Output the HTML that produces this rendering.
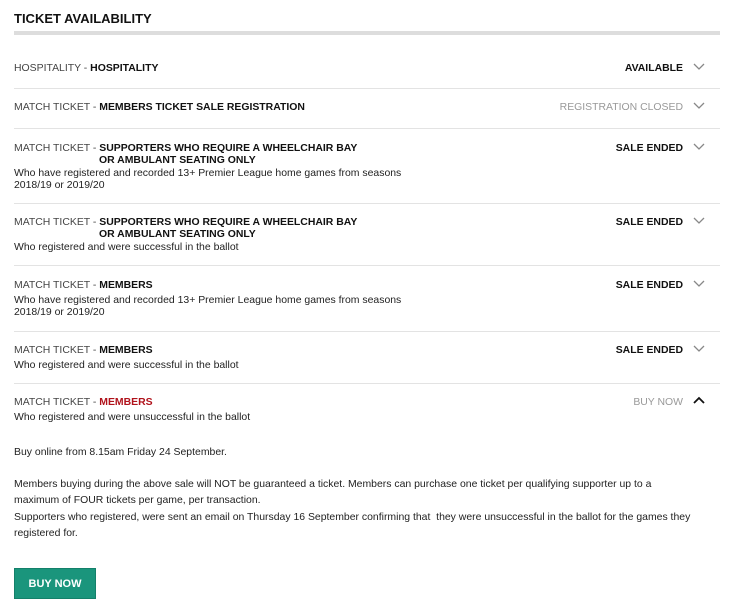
<!DOCTYPE html>
<html><head><style>
body{margin:0;width:730px;height:613px;background:#fff;font-family:"Liberation Sans",Arial,sans-serif;font-size:10.45px;color:#222;position:relative;overflow:hidden}
.a{position:absolute;white-space:nowrap;line-height:13px}
.t{position:absolute;left:14px;top:11px;font-size:13px;font-weight:bold;color:#111}
.bar{position:absolute;left:14px;top:31px;width:706px;height:4px;background:#ddd}
.sep{position:absolute;left:14px;width:706px;height:1px;background:#e3e3e3}
.g{color:#444}
b{color:#111}
.r{position:absolute;right:47px;font-weight:bold;color:#111;line-height:13px}
.rg{color:#999;font-weight:normal}
.ch{position:absolute;left:693px;width:12px;height:8px}
.btn{position:absolute;left:14px;top:568px;width:82px;height:31px;background:#1a957c;color:#fff;font-weight:bold;font-size:11px;text-align:center;line-height:31px;border:1px solid #14806a;box-sizing:border-box}
</style></head><body>
<div class="t">TICKET AVAILABILITY</div>
<div class="bar"></div>

<div class="a" style="left:14px;top:62px"><span class="g">HOSPITALITY - </span><b>HOSPITALITY</b></div>
<div class="r" style="top:62px">AVAILABLE</div>
<svg class="ch" style="top:63px" viewBox="0 0 12 8"><path d="M1 1l5 5 5-5" fill="none" stroke="#888" stroke-width="1.3"/></svg>
<div class="sep" style="top:88px"></div>

<div class="a" style="left:14px;top:101px"><span class="g">MATCH TICKET - </span><b>MEMBERS TICKET SALE REGISTRATION</b></div>
<div class="r rg" style="top:101px">REGISTRATION CLOSED</div>
<svg class="ch" style="top:102px" viewBox="0 0 12 8"><path d="M1 1l5 5 5-5" fill="none" stroke="#888" stroke-width="1.3"/></svg>
<div class="sep" style="top:128px"></div>

<div class="a" style="left:14px;top:142px"><span class="g">MATCH TICKET - </span><b>SUPPORTERS WHO REQUIRE A WHEELCHAIR BAY</b></div>
<div class="a" style="left:99px;top:154px"><b>OR AMBULANT SEATING ONLY</b></div>
<div class="a" style="left:14px;top:167px">Who have registered and recorded 13+ Premier League home games from seasons</div>
<div class="a" style="left:14px;top:179px">2018/19 or 2019/20</div>
<div class="r" style="top:142px">SALE ENDED</div>
<svg class="ch" style="top:143px" viewBox="0 0 12 8"><path d="M1 1l5 5 5-5" fill="none" stroke="#888" stroke-width="1.3"/></svg>
<div class="sep" style="top:203px"></div>

<div class="a" style="left:14px;top:216px"><span class="g">MATCH TICKET - </span><b>SUPPORTERS WHO REQUIRE A WHEELCHAIR BAY</b></div>
<div class="a" style="left:99px;top:228px"><b>OR AMBULANT SEATING ONLY</b></div>
<div class="a" style="left:14px;top:241px">Who registered and were successful in the ballot</div>
<div class="r" style="top:216px">SALE ENDED</div>
<svg class="ch" style="top:217px" viewBox="0 0 12 8"><path d="M1 1l5 5 5-5" fill="none" stroke="#888" stroke-width="1.3"/></svg>
<div class="sep" style="top:265px"></div>

<div class="a" style="left:14px;top:279px"><span class="g">MATCH TICKET - </span><b>MEMBERS</b></div>
<div class="a" style="left:14px;top:294px">Who have registered and recorded 13+ Premier League home games from seasons</div>
<div class="a" style="left:14px;top:306px">2018/19 or 2019/20</div>
<div class="r" style="top:279px">SALE ENDED</div>
<svg class="ch" style="top:280px" viewBox="0 0 12 8"><path d="M1 1l5 5 5-5" fill="none" stroke="#888" stroke-width="1.3"/></svg>
<div class="sep" style="top:331px"></div>

<div class="a" style="left:14px;top:344px"><span class="g">MATCH TICKET - </span><b>MEMBERS</b></div>
<div class="a" style="left:14px;top:359px">Who registered and were successful in the ballot</div>
<div class="r" style="top:344px">SALE ENDED</div>
<svg class="ch" style="top:345px" viewBox="0 0 12 8"><path d="M1 1l5 5 5-5" fill="none" stroke="#888" stroke-width="1.3"/></svg>
<div class="sep" style="top:383px"></div>

<div class="a" style="left:14px;top:396px"><span class="g">MATCH TICKET - </span><b style="color:#b0121b">MEMBERS</b></div>
<div class="a" style="left:14px;top:411px">Who registered and were unsuccessful in the ballot</div>
<div class="r rg" style="top:396px">BUY NOW</div>
<svg class="ch" style="top:396px" viewBox="0 0 12 8"><path d="M1 7l5-5 5 5" fill="none" stroke="#111" stroke-width="1.8"/></svg>

<div class="a" style="left:14px;top:446px">Buy online from 8.15am Friday 24 September.</div>
<div class="a" style="left:14px;top:478px">Members buying during the above sale will NOT be guaranteed a ticket. Members can purchase one ticket per qualifying supporter up to a</div>
<div class="a" style="left:14px;top:494px">maximum of FOUR tickets per game, per transaction.</div>
<div class="a" style="left:14px;top:511px">Supporters who registered, were sent an email on Thursday 16 September confirming that&nbsp; they were unsuccessful in the ballot for the games they</div>
<div class="a" style="left:14px;top:527px">registered for.</div>

<div class="btn">BUY NOW</div>
</body></html>
